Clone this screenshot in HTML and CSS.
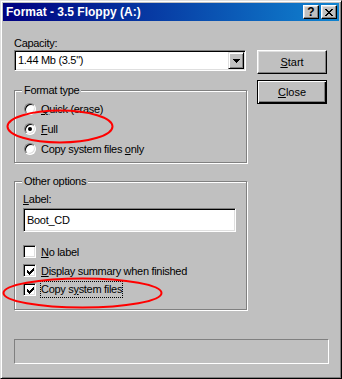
FILE: index.html
```
<!DOCTYPE html>
<html>
<head>
<meta charset="utf-8">
<link rel="stylesheet" href="styles.css">
</head>
<body>
<div class="window">
  <div class="titlebar">
    <span class="title">Format - 3.5 Floppy (A:)</span>
    <div class="tbtns">
      <div class="tbtn help">?</div>
      <div class="tbtn">
        <svg width="8" height="7" viewBox="0 0 8 7"><path d="M0 0h2v1h-2zM6 0h2v1h-2zM1 1h2v1h-2zM5 1h2v1h-2zM2 2h4v1h-4zM3 3h2v1h-2zM2 4h4v1h-4zM1 5h2v1h-2zM5 5h2v1h-2zM0 6h2v1h-2zM6 6h2v1h-2z" fill="#000"/></svg>
      </div>
    </div>
  </div>
  <div class="body">
    <div class="main">
      <div class="left">
        <div class="lbl">Capacity:</div>
        <div class="combo">
          <span class="combo-text">1.44 Mb (3.5")</span>
          <div class="drop">
            <svg width="7" height="4" viewBox="0 0 7 4"><path d="M0 0h7v1h-7zM1 1h5v1h-5zM2 2h3v1h-3zM3 3h1v1h-1z" fill="#000"/></svg>
          </div>
        </div>
        <div class="group g1">
          <div class="legend">Format type</div>
          <div class="opt"><span class="radio"></span><span><u>Q</u>uick (erase)</span></div>
          <div class="opt"><span class="radio on"><span class="dot"></span></span><span><u>F</u>ull</span></div>
          <div class="opt"><span class="radio"></span><span>Copy system files <u>o</u>nly</span></div>
        </div>
        <div class="group g2">
          <div class="legend">Other options</div>
          <div class="lbl2"><u>L</u>abel:</div>
          <div class="textbox">Boot_CD</div>
          <div class="checks">
            <div class="opt chk"><span class="box"></span><span><u>N</u>o label</span></div>
            <div class="opt chk"><span class="box"><svg width="9" height="9" viewBox="0 0 9 9"><path d="M1 3h1v3h-1zM2 4h1v3h-1zM3 5h1v3h-1zM4 4h1v3h-1zM5 3h1v3h-1zM6 2h1v3h-1zM7 1h1v3h-1z" fill="#000"/></svg></span><span><u>D</u>isplay summary when finished</span></div>
            <div class="opt chk"><span class="box"><svg width="9" height="9" viewBox="0 0 9 9"><path d="M1 3h1v3h-1zM2 4h1v3h-1zM3 5h1v3h-1zM4 4h1v3h-1zM5 3h1v3h-1zM6 2h1v3h-1zM7 1h1v3h-1z" fill="#000"/></svg></span><span class="focus">Copy s<u>y</u>stem files</span></div>
          </div>
        </div>
      </div>
      <div class="right">
        <div class="btn"><span><u>S</u>tart</span></div>
        <div class="btn default"><span><u>C</u>lose</span></div>
      </div>
    </div>
    <div class="progress"></div>
  </div>
  <svg class="marks" width="342" height="379" viewBox="0 0 342 379">
    <ellipse cx="60" cy="126.5" rx="52.5" ry="16" fill="none" stroke="#ff0000" stroke-width="2"/>
    <ellipse cx="82.5" cy="293" rx="79" ry="14.5" fill="none" stroke="#ff0000" stroke-width="2"/>
  </svg>
</div>
</body>
</html>
```
FILE: styles.css
```
html, body {
  margin: 0;
  padding: 0;
  background: #c0c0c0;
}
.window {
  position: relative;
  width: 342px;
  height: 379px;
  box-sizing: border-box;
  background: #c0c0c0;
  border: 1px solid;
  border-color: #dfdfdf #000 #000 #dfdfdf;
  box-shadow: inset 1px 1px #fff, inset -1px -1px #808080;
  padding: 2px;
  font-family: "Liberation Sans", Arial, sans-serif;
  font-size: 11px;
  letter-spacing: -0.3px;
  color: #000;
}
.titlebar {
  height: 18px;
  display: flex;
  align-items: center;
  justify-content: space-between;
  padding: 0 2px 0 3px;
  background: linear-gradient(to right, #000080, #1084d0);
}
.title {
  color: #fff;
  font-weight: bold;
  font-size: 12px;
  letter-spacing: 0;
  line-height: 18px;
}
.tbtns {
  display: flex;
  gap: 2px;
}
.tbtn {
  width: 16px;
  height: 14px;
  box-sizing: border-box;
  background: #c0c0c0;
  border: 1px solid;
  border-color: #fff #000 #000 #fff;
  box-shadow: inset -1px -1px #808080, inset 1px 1px #dfdfdf;
  display: flex;
  align-items: center;
  justify-content: center;
}
.help {
  font-weight: bold;
  font-size: 12px;
  letter-spacing: 0;
  line-height: 12px;
}
.body {
  padding: 16px 0 0 11px;
}
.main {
  display: flex;
  gap: 10px;
}
.left {
  width: 233px;
}
.lbl, .lbl2 {
  line-height: 13px;
  height: 13px;
}
.combo {
  width: 232px;
  height: 21px;
  box-sizing: border-box;
  background: #fff;
  border: 1px solid;
  border-color: #808080 #fff #fff #808080;
  box-shadow: inset 1px 1px #000, inset -1px -1px #dfdfdf;
  padding: 1px 1px 1px 3px;
  display: flex;
  align-items: center;
  justify-content: space-between;
}
.combo-text {
  line-height: 17px;
}
.drop {
  width: 16px;
  height: 17px;
  box-sizing: border-box;
  background: #c0c0c0;
  border: 1px solid;
  border-color: #dfdfdf #000 #000 #dfdfdf;
  box-shadow: inset 1px 1px #fff, inset -1px -1px #808080;
  display: flex;
  align-items: center;
  justify-content: center;
}
.drop svg {
  display: block;
}
.group {
  width: 233px;
  box-sizing: border-box;
  border: 1px solid #808080;
  box-shadow: inset 1px 1px #fff, 1px 1px #fff;
}
.g1 {
  margin-top: 19px;
  padding: 0 0 3px 9px;
}
.g2 {
  margin-top: 18px;
  padding: 0 0 10px 8px;
}
.legend {
  width: fit-content;
  margin: -7px 0 0 -2px;
  padding: 0 2px;
  background: #c0c0c0;
  line-height: 13px;
  height: 13px;
}
.g1 .legend {
  margin-bottom: 2px;
}
.g2 .legend {
  margin-bottom: 5px;
  margin-left: -1px;
}
.opt {
  height: 20px;
  display: flex;
  align-items: center;
  gap: 5px;
  white-space: nowrap;
}
.radio {
  width: 12px;
  height: 12px;
  box-sizing: border-box;
  border-radius: 50%;
  background: #fff;
  border: 1px solid;
  border-color: #808080 #fff #fff #808080;
  box-shadow: inset 1px 1px #000, inset -1px -1px #dfdfdf;
  display: flex;
  align-items: center;
  justify-content: center;
  flex: none;
}
.dot {
  width: 4px;
  height: 4px;
  border-radius: 50%;
  background: #000;
}
.textbox {
  margin-top: 2px;
  width: 213px;
  height: 24px;
  box-sizing: border-box;
  background: #fff;
  border: 1px solid;
  border-color: #808080 #fff #fff #808080;
  box-shadow: inset 1px 1px #000, inset -1px -1px #dfdfdf;
  padding-left: 3px;
  line-height: 22px;
}
.checks {
  margin-top: 10px;
}
.chk {
  height: 19px;
}
.box {
  width: 13px;
  height: 13px;
  box-sizing: border-box;
  background: #fff;
  border: 1px solid;
  border-color: #808080 #fff #fff #808080;
  box-shadow: inset 1px 1px #000, inset -1px -1px #dfdfdf;
  display: flex;
  align-items: center;
  justify-content: center;
  flex: none;
}
.box svg {
  display: block;
  margin: 1px 0 0 1px;
}
.focus {
  display: inline-block;
  line-height: 15px;
  outline: 1px dotted #000;
}
.right {
  width: 70px;
  padding-top: 13px;
  display: flex;
  flex-direction: column;
  gap: 6px;
}
.btn {
  height: 24px;
  box-sizing: border-box;
  background: #c0c0c0;
  border: 1px solid;
  border-color: #fff #000 #000 #fff;
  box-shadow: inset -1px -1px #808080, inset 1px 1px #dfdfdf;
  display: flex;
  align-items: center;
  justify-content: center;
  font-size: 11px;
  letter-spacing: 0;
}
.btn.default {
  border: 1px solid #000;
  box-shadow: inset 1px 1px #fff, inset -1px -1px #000, inset -2px -2px #808080;
}
.progress {
  margin-top: 29px;
  width: 315px;
  height: 25px;
  box-sizing: border-box;
  border: 1px solid;
  border-color: #808080 #fff #fff #808080;
}
.marks {
  position: absolute;
  left: -1px;
  top: -1px;
  pointer-events: none;
}
```
